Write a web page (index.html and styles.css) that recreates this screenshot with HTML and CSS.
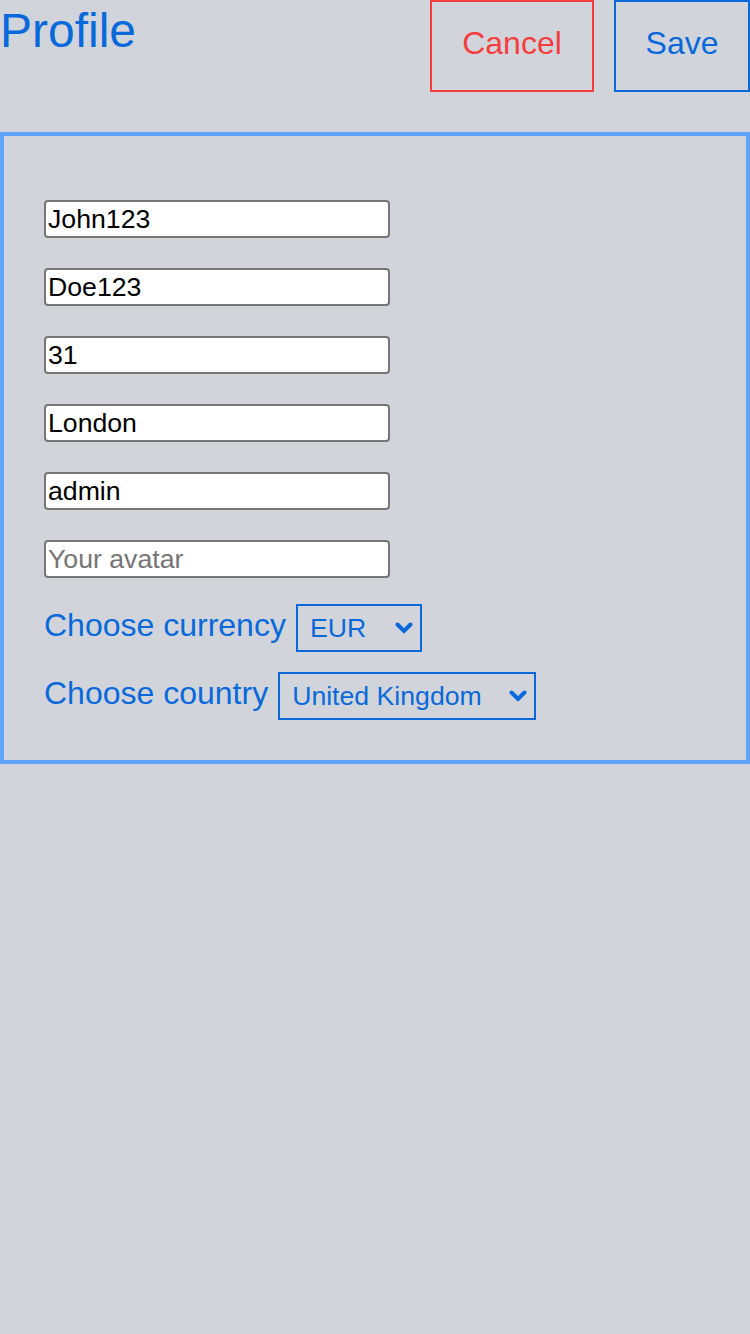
FILE: index.html
```html
<!DOCTYPE html>
<html lang="en">
<head>
<meta charset="utf-8">
<title>Profile</title>
<link rel="stylesheet" href="styles.css">
</head>
<body>
<header class="header">
  <h1 class="title">Profile</h1>
  <div class="actions">
    <button class="btn btn-cancel" type="button">Cancel</button>
    <button class="btn btn-save" type="button">Save</button>
  </div>
</header>
<form class="panel">
  <div class="fields">
    <input class="field" type="text" value="John123">
    <input class="field" type="text" value="Doe123">
    <input class="field" type="text" value="31">
    <input class="field" type="text" value="London">
    <input class="field" type="text" value="admin">
    <input class="field" type="text" placeholder="Your avatar">
  </div>
  <div class="choice choice-currency">
    <label class="choice-label" for="currency">Choose currency</label>
    <div class="select-wrap select-currency">
      <select id="currency" class="select">
        <option>EUR</option>
        <option>USD</option>
        <option>GBP</option>
      </select>
      <svg class="chevron" width="18" height="12" viewBox="0 0 18 12" aria-hidden="true"><polyline points="2.5,2.5 9,9 15.5,2.5" fill="none" stroke="currentColor" stroke-width="4" stroke-linecap="round" stroke-linejoin="miter"/></svg>
    </div>
  </div>
  <div class="choice choice-country">
    <label class="choice-label" for="country">Choose country</label>
    <div class="select-wrap select-country">
      <select id="country" class="select">
        <option>United Kingdom</option>
        <option>France</option>
        <option>Germany</option>
      </select>
      <svg class="chevron" width="18" height="12" viewBox="0 0 18 12" aria-hidden="true"><polyline points="2.5,2.5 9,9 15.5,2.5" fill="none" stroke="currentColor" stroke-width="4" stroke-linecap="round" stroke-linejoin="miter"/></svg>
    </div>
  </div>
</form>
</body>
</html>
```

FILE: styles.css
```css
* {
  box-sizing: border-box;
}

html, body {
  margin: 0;
  padding: 0;
}

body {
  background: #d1d5db;
  font-family: "Liberation Sans", Arial, sans-serif;
  color: #0969da;
  width: 750px;
  min-height: 1334px;
}

.header {
  display: flex;
  justify-content: space-between;
  align-items: flex-start;
}

.title {
  margin: 0;
  padding-top: 3px;
  font-size: 48px;
  font-weight: normal;
  line-height: normal;
  color: #0969da;
}

.actions {
  display: flex;
  gap: 20px;
}

.btn {
  height: 92px;
  margin: 0;
  padding: 23px 0 28px;
  background: transparent;
  border: 2px solid;
  border-radius: 0;
  font-family: "Liberation Sans", Arial, sans-serif;
  font-size: 32px;
  line-height: 37px;
  text-align: center;
}

.btn-cancel {
  width: 164px;
  color: #f53d3d;
  border-color: #f53d3d;
}

.btn-save {
  width: 136px;
  color: #0969da;
  border-color: #0969da;
}

.panel {
  margin-top: 40px;
  border: 4px solid #60a5fa;
  padding: 64px 40px 40px;
}

.fields {
  display: flex;
  flex-direction: column;
  gap: 30px;
}

.field {
  width: 346px;
  height: 38px;
  margin: 0;
  padding: 0 2px;
  border: 2px solid #767676;
  border-radius: 4px;
  background: #ffffff;
  font-family: "Liberation Sans", Arial, sans-serif;
  font-size: 26.67px;
  color: #000000;
  outline: none;
}

.field::placeholder {
  color: #757575;
  opacity: 1;
}

.choice {
  display: flex;
  align-items: flex-start;
  gap: 10px;
}

.choice-currency {
  margin-top: 26px;
}

.choice-country {
  margin-top: 20px;
}

.choice-label {
  font-size: 32px;
  line-height: 37px;
  padding-top: 3px;
  color: #0969da;
}

.select-wrap {
  position: relative;
  color: #0969da;
}

.select {
  -webkit-appearance: none;
  appearance: none;
  display: block;
  height: 48px;
  margin: 0;
  padding: 0 36px 0 12px;
  border: 2px solid #0969da;
  border-radius: 0;
  background: transparent;
  font-family: "Liberation Sans", Arial, sans-serif;
  font-size: 26.67px;
  color: #0969da;
  outline: none;
}

.select-currency .select {
  width: 126px;
}

.select-country .select {
  width: 258px;
}

.chevron {
  position: absolute;
  right: 9px;
  top: 18px;
  pointer-events: none;
}
```
